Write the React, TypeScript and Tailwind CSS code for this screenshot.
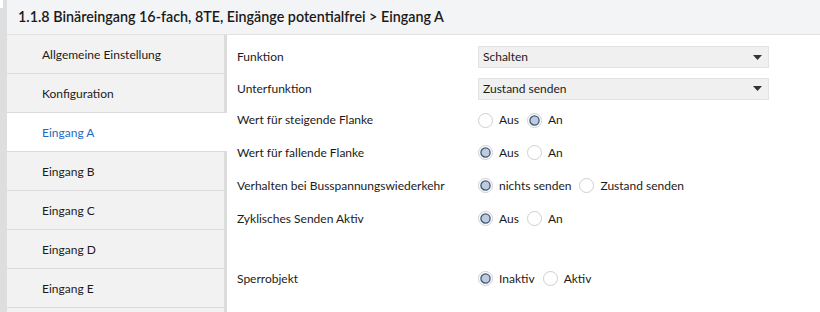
import React from "react";

const items = [
  "Allgemeine Einstellung",
  "Konfiguration",
  "Eingang A",
  "Eingang B",
  "Eingang C",
  "Eingang D",
  "Eingang E",
];

function Radio({ checked }: { checked: boolean }) {
  return (
    <svg width="15" height="15" viewBox="0 0 15 15" className="shrink-0">
      <circle cx="7.5" cy="7.5" r="7" fill="#ffffff" stroke="#cfcfcf" strokeWidth="1" />
      {checked && (
        <circle cx="7.5" cy="7.5" r="4.6" fill="#bccbde" stroke="#3d5678" strokeWidth="1.3" />
      )}
    </svg>
  );
}

function RadioGroup({ options, selected }: { options: string[]; selected: number }) {
  return (
    <div className="flex items-center whitespace-nowrap">
      {options.map((o, i) => (
        <div key={o} className="flex items-center mr-[8px]">
          <Radio checked={i === selected} />
          <span className="ml-[6px]">{o}</span>
        </div>
      ))}
    </div>
  );
}

function Select({ value }: { value: string }) {
  return (
    <div className="w-[291px] h-[22px] bg-[#f0f0f0] border border-[#e3e3e3] flex items-center justify-between pl-[4px] pr-[6px]">
      <span>{value}</span>
      <svg width="9" height="5" viewBox="0 0 9 5">
        <path d="M0 0 H9 L4.5 5 Z" fill="#333333" />
      </svg>
    </div>
  );
}

function Row({ label, h, children }: { label: string; h: string; children: React.ReactNode }) {
  return (
    <div className={`flex items-center shrink-0 ${h}`}>
      <div className="w-[241px] shrink-0 whitespace-nowrap">{label}</div>
      {children}
    </div>
  );
}

export default function App() {
  return (
    <div className="w-[820px] h-[312px] flex bg-white overflow-hidden text-[#1b1b1b] font-['Lato',sans-serif]">
      <div className="w-[7px] shrink-0 bg-[#dedede] flex flex-col">
        <div className="w-[3px] h-[8px] bg-white" />
      </div>
      <div className="flex-1 flex flex-col min-w-0">
        <div className="h-[35px] shrink-0 bg-[#f3f4f6] border-b border-[#e2e2e2] flex items-center pl-[11px] text-[14.3px] font-semibold text-[#1a1a1a] whitespace-nowrap">
          1.1.8 Binäreingang 16-fach, 8TE, Eingänge potentialfrei &gt; Eingang A
        </div>
        <div className="flex flex-1 min-h-0">
          <div className="w-[220px] shrink-0 flex flex-col">
            {items.map((it) => {
              const active = it === "Eingang A";
              return (
                <div
                  key={it}
                  className={
                    active
                      ? "h-[39px] shrink-0 flex items-center pl-[35px] pt-[2px] bg-white border-b border-[#dcdcdc] text-[12px] text-[#1c6bbf]"
                      : "h-[39px] shrink-0 flex items-center pl-[35px] pt-[2px] bg-[#f2f2f2] border-b border-[#dcdcdc] border-r-[3px] border-r-[#dcdcdc] text-[12px]"
                  }
                >
                  {it}
                </div>
              );
            })}
            <div className="flex-1 bg-[#f2f2f2] border-r-[3px] border-r-[#dcdcdc]" />
          </div>
          <div className="flex-1 flex flex-col pl-[10px] pt-[6px] text-[12px]">
            <Row label="Funktion" h="h-[32px]">
              <Select value="Schalten" />
            </Row>
            <Row label="Unterfunktion" h="h-[31px]">
              <Select value="Zustand senden" />
            </Row>
            <Row label="Wert für steigende Flanke" h="h-[32px]">
              <RadioGroup options={["Aus", "An"]} selected={1} />
            </Row>
            <Row label="Wert für fallende Flanke" h="h-[33px]">
              <RadioGroup options={["Aus", "An"]} selected={0} />
            </Row>
            <Row label="Verhalten bei Busspannungswiederkehr" h="h-[33px]">
              <RadioGroup options={["nichts senden", "Zustand senden"]} selected={0} />
            </Row>
            <Row label="Zyklisches Senden Aktiv" h="h-[33px]">
              <RadioGroup options={["Aus", "An"]} selected={0} />
            </Row>
            <div className="h-[27px] shrink-0" />
            <Row label="Sperrobjekt" h="h-[33px]">
              <RadioGroup options={["Inaktiv", "Aktiv"]} selected={0} />
            </Row>
          </div>
        </div>
      </div>
    </div>
  );
}
